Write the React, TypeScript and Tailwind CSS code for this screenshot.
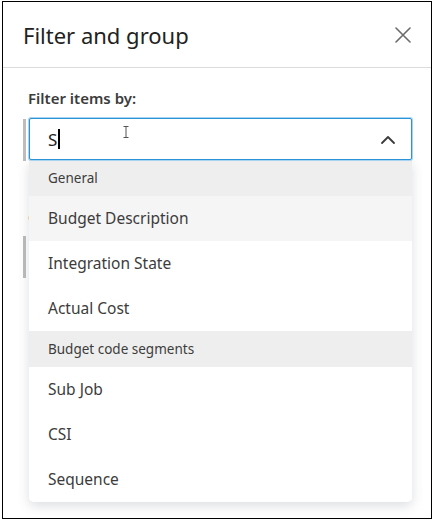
import React from 'react';

const font = { fontFamily: '"Noto Sans", "Open Sans", sans-serif' };

type Row = { kind: 'group' | 'item'; label: string; hover?: boolean };

const rows: Row[] = [
  { kind: 'group', label: 'General' },
  { kind: 'item', label: 'Budget Description', hover: true },
  { kind: 'item', label: 'Integration State' },
  { kind: 'item', label: 'Actual Cost' },
  { kind: 'group', label: 'Budget code segments' },
  { kind: 'item', label: 'Sub Job' },
  { kind: 'item', label: 'CSI' },
  { kind: 'item', label: 'Sequence' },
];

function CloseIcon() {
  return (
    <svg width="16" height="16" viewBox="0 0 16 16" fill="none">
      <path d="M1 1L15 15M15 1L1 15" stroke="#6b6b6b" strokeWidth="1.6" strokeLinecap="round" />
    </svg>
  );
}

function ChevronUp() {
  return (
    <svg width="14" height="9" viewBox="0 0 14 9" fill="none">
      <path d="M1 8L7 2L13 8" stroke="#3c3c3c" strokeWidth="1.8" strokeLinecap="round" strokeLinejoin="round" />
    </svg>
  );
}

function IBeam() {
  return (
    <svg width="6" height="12" viewBox="0 0 6 12" fill="none">
      <path d="M0.5 0.5H5.5M3 0.5V11.5M0.5 11.5H5.5" stroke="#555" strokeWidth="1" />
    </svg>
  );
}

export default function App() {
  return (
    <div className="relative w-[432px] h-[520px] bg-white overflow-hidden" style={font}>
      {/* Modal frame */}
      <div className="absolute left-[2px] top-[1px] w-[430px] h-[518px] border border-black bg-white">
        {/* Header */}
        <div className="flex items-center justify-between h-[66px] pl-[20px] pr-[19px] border-b border-[#dcdcdc]">
          <h1 className="text-[22px] leading-none text-[#222] pt-[1px]">Filter and group</h1>
          <button type="button" className="flex items-center justify-center w-[18px] h-[18px]">
            <CloseIcon />
          </button>
        </div>

        {/* Underlying form, mostly hidden by the open list */}
        <div className="pl-[20px] pr-[16px] pt-[20px]">
          <label className="block pl-[5px] text-[15px] font-semibold text-[#3c3c3c] leading-[20px]">Filter items by:</label>
          <div className="mt-[11px] h-[42px] border-l-[3px] border-[#bdbdbd]" />
          <label className="block mt-[46px] pl-[5px] text-[15px] font-semibold text-[#3c3c3c] leading-[20px]">G</label>
          <div className="mt-[9px] h-[42px] border-l-[3px] border-[#bdbdbd]" />
        </div>
      </div>

      {/* Open combobox */}
      <div className="absolute left-[29px] top-[118px] w-[383px]">
        <div className="relative flex items-center h-[42px] px-[18px] border border-[#2b93d6] rounded-[2px] shadow-[0_0_0_1px_#a8d4f2] bg-white">
          <span className="text-[17px] text-[#222] leading-none">S</span>
          <span className="ml-[1px] w-[1.5px] h-[20px] bg-black" />
          <div className="absolute left-[93px] top-[7px]">
            <IBeam />
          </div>
          <div className="ml-auto mr-[-2px] flex items-center">
            <ChevronUp />
          </div>
        </div>
        <ul className="bg-white rounded-b-[5px] shadow-[0_4px_12px_rgba(60,70,90,0.18)] overflow-hidden">
          {rows.map((r) =>
            r.kind === 'group' ? (
              <li key={r.label} className="flex items-center h-[36px] px-[19px] bg-[#eeeeee] text-[13.5px] text-[#3c3c3c]">
                {r.label}
              </li>
            ) : (
              <li
                key={r.label}
                className={`flex items-center h-[45px] px-[19px] text-[15.5px] text-[#3c3c3c] ${r.hover ? 'bg-[#f5f5f5]' : 'bg-white'}`}
              >
                {r.label}
              </li>
            )
          )}
        </ul>
      </div>
    </div>
  );
}
